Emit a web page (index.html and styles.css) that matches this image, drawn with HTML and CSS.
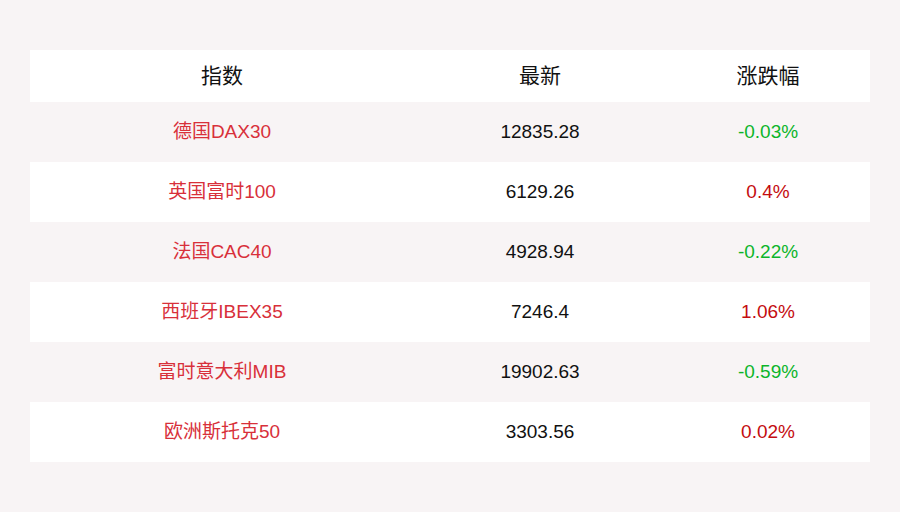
FILE: index.html
```html
<!DOCTYPE html>
<html lang="zh">
<head>
<meta charset="utf-8">
<link rel="stylesheet" href="styles.css">
</head>
<body>
<div class="page">
  <div class="table">
    <div class="row head">
      <div class="c1">指数</div><div class="c2">最新</div><div class="c3">涨跌幅</div>
    </div>
    <div class="row odd">
      <div class="c1 name">德国DAX30</div><div class="c2">12835.28</div><div class="c3 down">-0.03%</div>
    </div>
    <div class="row">
      <div class="c1 name">英国富时100</div><div class="c2">6129.26</div><div class="c3 up">0.4%</div>
    </div>
    <div class="row odd">
      <div class="c1 name">法国CAC40</div><div class="c2">4928.94</div><div class="c3 down">-0.22%</div>
    </div>
    <div class="row">
      <div class="c1 name">西班牙IBEX35</div><div class="c2">7246.4</div><div class="c3 up">1.06%</div>
    </div>
    <div class="row odd">
      <div class="c1 name">富时意大利MIB</div><div class="c2">19902.63</div><div class="c3 down">-0.59%</div>
    </div>
    <div class="row">
      <div class="c1 name">欧洲斯托克50</div><div class="c2">3303.56</div><div class="c3 up">0.02%</div>
    </div>
  </div>
</div>
</body>
</html>
```
FILE: styles.css
```css
html, body {
  margin: 0;
  padding: 0;
  background: #f8f4f5;
}
.page {
  width: 900px;
  height: 512px;
  padding: 50px 30px 0;
  box-sizing: border-box;
  font-family: "Liberation Sans", "Noto Sans CJK SC", sans-serif;
}
.table {
  width: 840px;
}
.row {
  display: grid;
  grid-template-columns: 384px 252px 204px;
  height: 60px;
  align-items: center;
  background: #ffffff;
  font-size: 19px;
  line-height: 20px;
  color: #111;
  text-align: center;
}
.row.odd {
  background: #f8f4f5;
}
.row.head {
  height: 52px;
  font-size: 21px;
  line-height: 22px;
  color: #111;
}
.name { color: #d8303a; }
.up { color: #c40c10; }
.down { color: #0cb52a; }
```
